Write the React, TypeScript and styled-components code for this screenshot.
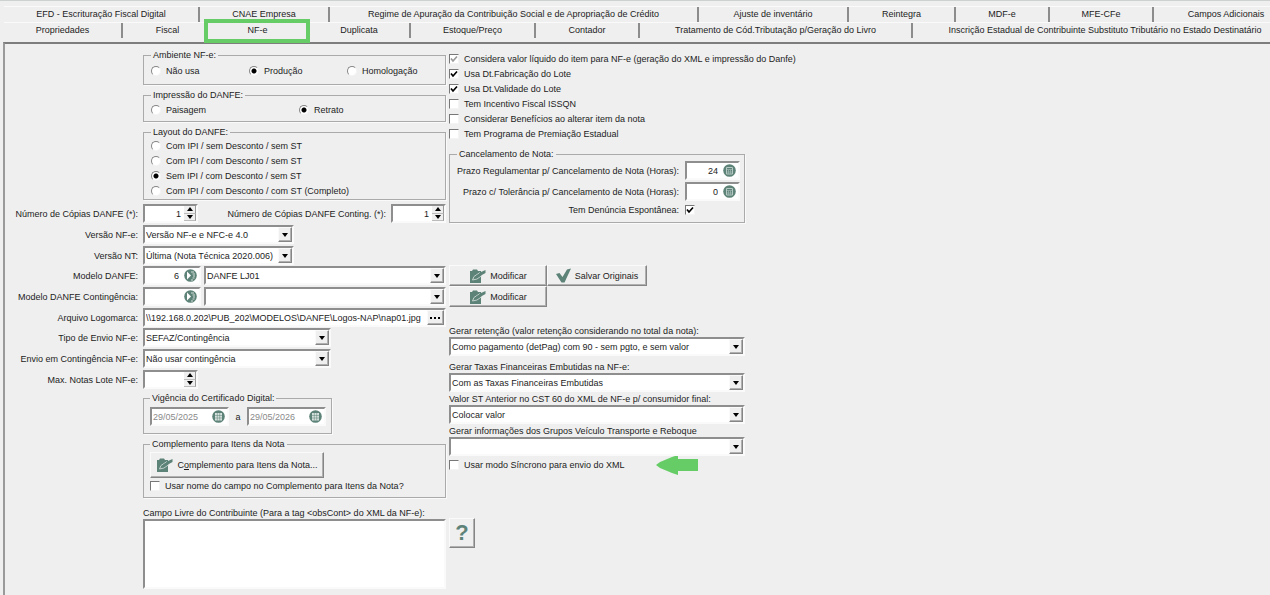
import React, { useId } from "react";
import styled, { createGlobalStyle, css } from "styled-components";

const Global = createGlobalStyle`
  *, *::before, *::after { box-sizing: border-box; }
  html, body, #root { min-height: 100vh; }
  body { margin: 0; background: #efefef; overflow-x: hidden; }
  body, button, input, select, textarea {
    font-family: "Liberation Sans", Arial, sans-serif;
    font-size: 9px;
    line-height: 12px;
    color: #1c1c1c;
  }
`;

const TEAL = "#5d8277";

const sunken = css`
  background: #fff;
  border: 2px solid;
  border-color: #8e8e8e #fafafa #fafafa #8e8e8e;
`;
const raised = css`
  background: #efefef;
  border: 1px solid;
  border-color: #fafafa #858585 #858585 #fafafa;
  box-shadow: inset -1px -1px 0 #b0b0b0;
`;

const Window = styled.div`
  display: flex;
  flex-direction: column;
  min-height: 100vh;
  padding: 5px 0 0 3px;
  border-top: 1px solid #cdd1cf;
  overflow: hidden;
`;
const TabRow = styled.div`
  display: flex;
  height: 16px;
  margin-left: 1px;
  border-top: 1px solid #fafafa;
`;
const Tab = styled.button<{ $w: number; $on?: boolean }>`
  position: relative;
  z-index: ${(p) => (p.$on ? 1 : 0)};
  flex: 0 0 ${(p) => p.$w}px;
  height: 15px;
  margin-left: ${(p) => (p.$on ? "-8px" : "0")};
  padding: 0;
  background: #efefef;
  border: 0;
  border-right: ${(p) => (p.$on ? "0" : "2px solid #8c8c8c")};
  line-height: ${(p) => (p.$on ? "13px" : "15px")};
  white-space: nowrap;
`;
const Highlight = styled.span`
  position: absolute;
  inset: -4px -1px -5px -2px;
  border: 4px solid #66cc66;
`;
const Page = styled.main`
  flex: 1;
  display: flex;
  align-items: flex-start;
  gap: 3px;
  margin-top: 4px;
  padding: 5px 0 4px;
  border: solid;
  border-width: 2px 0 0 2px;
  border-color: #7d7d7d #efefef #efefef #9a9a9a;
`;
const Column = styled.div<{ $w: number }>`
  display: flex;
  flex-direction: column;
  flex: 0 0 ${(p) => p.$w}px;
  min-width: 0;
  width: ${(p) => p.$w}px;
`;
const Indented = styled.div<{ $top?: number }>`
  display: flex;
  flex-direction: column;
  margin-top: ${(p) => p.$top ?? 0}px;
  margin-left: 138px;
  gap: 4px;
`;
const Group = styled.fieldset<{ $pad: string; $w?: number }>`
  margin: 0;
  min-width: 0;
  width: ${(p) => (p.$w ? p.$w + "px" : "auto")};
  padding: ${(p) => p.$pad};
  border: 1px solid #aaa;
  box-shadow: 1px 1px 0 #fafafa;
`;
const Legend = styled.legend<{ $indent?: number }>`
  margin-left: ${(p) => p.$indent ?? 0}px;
  padding: 0 2px;
  line-height: 12px;
`;
const Options = styled.div<{ $cols?: string }>`
  display: grid;
  grid-template-columns: ${(p) => p.$cols ?? "auto"};
`;
const OptionLabel = styled.label<{ $h: number }>`
  display: flex;
  align-items: center;
  gap: 5px;
  height: ${(p) => p.$h}px;
  white-space: nowrap;
`;
const RadioInput = styled.input`
  appearance: none;
  flex: none;
  width: 10px;
  height: 10px;
  margin: 0;
  border-radius: 50%;
  border: 1px solid;
  border-color: #858585 #f4f4f4 #f4f4f4 #858585;
  background: #fff;
  &:checked {
    background: radial-gradient(circle, #000 0 2px, #fff 3px);
  }
`;
const CheckWrap = styled.span`
  position: relative;
  flex: none;
  display: flex;
  width: 10px;
  height: 10px;
`;
const CheckInput = styled.input`
  appearance: none;
  width: 10px;
  height: 10px;
  margin: 0;
  border: 1px solid;
  border-color: #777 #f4f4f4 #f4f4f4 #777;
  background: #fff;
  & + svg { display: none; }
  &:checked + svg { display: block; }
`;
const Tick = styled.svg`
  position: absolute;
  inset: 1px;
  pointer-events: none;
`;
const Rows = styled.div`
  display: flex;
  flex-direction: column;
  gap: 1px;
  margin-top: 4px;
`;
const RowBlock = styled.div`
  display: flex;
  flex-direction: column;
  gap: 2px;
`;
const Row = styled.div`
  display: grid;
  grid-template-columns: 133px 303px;
  column-gap: 5px;
  align-items: center;
  height: 19px;
`;
const RowLabel = styled.label`
  text-align: right;
  white-space: nowrap;
`;
const Controls = styled.div<{ $spread?: boolean }>`
  display: flex;
  align-items: center;
  justify-content: ${(p) => (p.$spread ? "space-between" : "flex-start")};
  gap: 3px;
`;
const SecondCounter = styled(Controls)`
  gap: 5px;
`;
const Field = styled.div<{ $w?: number }>`
  ${sunken}
  position: relative;
  display: flex;
  align-items: center;
  flex: ${(p) => (p.$w ? `0 0 ${p.$w}px` : "1")};
  height: 19px;
`;
const TextInput = styled.input<{ $right?: boolean }>`
  flex: 1;
  min-width: 0;
  width: 0;
  height: 15px;
  padding: 0 1px;
  border: 0;
  background: none;
  outline: 0;
  text-align: ${(p) => (p.$right ? "right" : "left")};
  &:disabled { color: #8a8a8a; }
`;
const FieldIcon = styled.button`
  display: flex;
  flex: none;
  padding: 0;
  margin: 0 2px 0 4px;
  border: 0;
  background: none;
`;
const Stepper = styled.span`
  display: flex;
  flex-direction: column;
  flex: none;
  width: 12px;
  height: 15px;
  margin-left: 2px;
`;
const StepButton = styled.button`
  display: flex;
  align-items: center;
  justify-content: center;
  flex: 1;
  min-height: 0;
  padding: 0;
  background: #efefef;
  border: 0;
  border-right: 1px solid #999;
  border-bottom: 1px solid #bbb;
`;
const NativeSelect = styled.select`
  appearance: none;
  width: 100%;
  height: 15px;
  padding: 0 14px 0 1px;
  border: 0;
  background: none;
  outline: 0;
`;
const SelectArrow = styled.span`
  ${raised}
  position: absolute;
  right: 0;
  top: 0;
  display: flex;
  align-items: center;
  justify-content: center;
  width: 14px;
  height: 15px;
  pointer-events: none;
`;
const Browse = styled.button`
  ${raised}
  display: flex;
  align-items: center;
  justify-content: center;
  width: 17px;
  height: 15px;
  padding: 0;
`;
const Push = styled.button<{ $w: number; $h: number }>`
  ${raised}
  display: flex;
  align-items: center;
  justify-content: center;
  gap: 4px;
  width: ${(p) => p.$w}px;
  height: ${(p) => p.$h}px;
  padding: 0;
  white-space: nowrap;
`;
const ButtonGrid = styled.div`
  display: grid;
  grid-template-columns: 98px 100px;
  margin-top: 42px;
`;
const CancelRow = styled.div<{ $h: number }>`
  display: grid;
  grid-template-columns: 229px 55px;
  column-gap: 6px;
  align-items: center;
  height: ${(p) => p.$h}px;
`;
const Stacked = styled.div<{ $top: number }>`
  display: flex;
  flex-direction: column;
  margin-top: ${(p) => p.$top}px;
`;
const StackedLabel = styled.label`
  white-space: nowrap;
`;
const StackedField = styled.div`
  display: flex;
`;
const SyncRow = styled.div`
  display: flex;
  align-items: center;
  gap: 31px;
  height: 18px;
`;
const Memo = styled.textarea`
  ${sunken}
  height: 70px;
  width: 100%;
  resize: none;
  outline: 0;
`;
const HelpMark = styled.span`
  font-size: 22px;
  line-height: 24px;
  font-weight: bold;
  color: ${TEAL};
`;
const Dates = styled.div`
  display: flex;
  align-items: center;
  justify-content: space-between;
`;

const Triangle = ({ up }: { up?: boolean }) => (
  <svg width="6" height="4" viewBox="0 0 6 4">
    <path d={up ? "M0 4 3 0 6 4z" : "M0 0h6L3 4z"} fill="#000" />
  </svg>
);
const EditIcon = () => (
  <svg width="17" height="16" viewBox="0 0 17 16">
    <path d="M1 3h2l1-1.500h4L9 3h3v12H1z" fill={TEAL} />
    <path d="M3.500 12 5 8.500 11 4.500M3.500 12 8 11l5-3.500" fill="none" stroke="#c3d1cc" strokeWidth="1" />
    <path d="M5.500 9 12 4l4.500-2v3L12 7.500 7 10.500z" fill={TEAL} />
  </svg>
);
const CheckIcon = () => (
  <svg width="15" height="15" viewBox="0 0 15 15">
    <path d="M0 6l3.500-1L6.500 9 11 1.500 15 .5 8.500 14.500h-3z" fill={TEAL} />
  </svg>
);
const SearchIcon = () => (
  <svg width="13" height="13" viewBox="0 0 13 13">
    <circle cx="6.5" cy="6.5" r="6.3" fill={TEAL} />
    <path d="M3 2.500 7 6.500 3 10.500z" fill="#fff" />
    <path d="M7 3h3M8.500 5h2.500M9 7h2M8.500 9h2M7 11h2" stroke="#d5e0dc" />
  </svg>
);
const CalcIcon = () => (
  <svg width="13" height="13" viewBox="0 0 13 13">
    <circle cx="6.5" cy="6.5" r="6.3" fill={TEAL} />
    <path d="M3.500 3.500h6v6.500h-6z" fill="none" stroke="#b5c8c2" />
    <path d="M4 5.500h5M5.500 6v4M7.500 6v4M4 8h5" stroke="#9db5ae" strokeWidth=".8" />
  </svg>
);
const CalendarIcon = () => (
  <svg width="13" height="13" viewBox="0 0 13 13">
    <circle cx="6.5" cy="6.5" r="6.3" fill={TEAL} />
    <path d="M3 3h7v7.500H3z" fill="#d6e1de" />
    <path d="M3 5.500h7M3 8h7M5.300 3v7.500M7.700 3v7.500" stroke={TEAL} strokeWidth=".5" />
  </svg>
);

const Radio = ({ name, label, on, h = 12 }: { name: string; label: string; on?: boolean; h?: number }) => (
  <OptionLabel $h={h}>
    <RadioInput type="radio" name={name} defaultChecked={on} />
    {label}
  </OptionLabel>
);
const Box = ({ id, on, off }: { id?: string; on?: boolean; off?: boolean }) => (
  <CheckWrap>
    <CheckInput id={id} type="checkbox" defaultChecked={on} disabled={off} />
    <Tick width="8" height="8" viewBox="0 0 8 8">
      <path d="M1 3.500 3 6 7 1.500" fill="none" stroke={off ? "#999" : "#000"} strokeWidth="1.700" />
    </Tick>
  </CheckWrap>
);
const Check = ({ label, on, off }: { label: string; on?: boolean; off?: boolean }) => (
  <OptionLabel $h={15}>
    <Box on={on} off={off} />
    {label}
  </OptionLabel>
);
const Spin = ({ id, value }: { id: string; value: string }) => (
  <Field $w={55}>
    <TextInput id={id} defaultValue={value} $right />
    <Stepper>
      <StepButton type="button" aria-label="Aumentar"><Triangle up /></StepButton>
      <StepButton type="button" aria-label="Diminuir"><Triangle /></StepButton>
    </Stepper>
  </Field>
);
const Select = ({ id, value, w, label }: { id?: string; value: string; w?: number; label?: string }) => (
  <Field $w={w}>
    <NativeSelect id={id} aria-label={label}>
      <option>{value}</option>
    </NativeSelect>
    <SelectArrow><Triangle /></SelectArrow>
  </Field>
);
const SelectRow = ({ label, value, w }: { label: string; value: string; w: number }) => {
  const id = useId();
  return (
    <Row>
      <RowLabel htmlFor={id}>{label}</RowLabel>
      <Controls><Select id={id} value={value} w={w} /></Controls>
    </Row>
  );
};
const ModelRow = ({ label, code, name }: { label: string; code: string; name: string }) => {
  const id = useId();
  return (
    <Row>
      <RowLabel htmlFor={id}>{label}</RowLabel>
      <Controls>
        <Field $w={58}>
          <TextInput id={id} defaultValue={code} $right />
          <FieldIcon type="button" aria-label="Pesquisar"><SearchIcon /></FieldIcon>
        </Field>
        <Select value={name} label={label} />
      </Controls>
    </Row>
  );
};
const HoursRow = ({ label, value }: { label: string; value: string }) => {
  const id = useId();
  return (
    <CancelRow $h={21}>
      <RowLabel htmlFor={id}>{label}</RowLabel>
      <Field>
        <TextInput id={id} defaultValue={value} $right />
        <FieldIcon type="button" aria-label="Calculadora"><CalcIcon /></FieldIcon>
      </Field>
    </CancelRow>
  );
};
const StackedSelect = ({ label, value, top }: { label: string; value: string; top: number }) => {
  const id = useId();
  return (
    <Stacked $top={top}>
      <StackedLabel htmlFor={id}>{label}</StackedLabel>
      <StackedField><Select id={id} value={value} /></StackedField>
    </Stacked>
  );
};
const DateField = ({ value, label }: { value: string; label: string }) => (
  <Field $w={79}>
    <TextInput defaultValue={value} aria-label={label} disabled />
    <FieldIcon type="button" aria-label="Calendário"><CalendarIcon /></FieldIcon>
  </Field>
);

const upperTabs: [string, number][] = [
  ["EFD - Escrituração Fiscal Digital", 196],
  ["CNAE Empresa", 130],
  ["Regime de Apuração da Contribuição Social e de Apropriação de Crédito", 369],
  ["Ajuste de inventário", 150],
  ["Reintegra", 107],
  ["MDF-e", 94],
  ["MFE-CFe", 104],
  ["Campos Adicionais", 146],
];
const lowerTabs: [string, number][] = [
  ["Propriedades", 119],
  ["Fiscal", 91],
  ["NF-e", 103],
  ["Duplicata", 102],
  ["Estoque/Preço", 125],
  ["Contador", 104],
  ["Tratamento de Cód.Tributação p/Geração do Livro", 273],
  ["Inscrição Estadual de Contribuinte Substituto Tributário no Estado Destinatário", 386],
];

export default function App() {
  return (
    <>
      <Global />
      <Window>
        <TabRow role="tablist">
          {upperTabs.map(([t, w]) => <Tab key={t} role="tab" $w={w}>{t}</Tab>)}
        </TabRow>
        <TabRow role="tablist">
          {lowerTabs.map(([t, w]) => (
            <Tab key={t} role="tab" $w={w} $on={t === "NF-e"} aria-selected={t === "NF-e"}>
              {t}
              {t === "NF-e" && <Highlight />}
            </Tab>
          ))}
        </TabRow>
        <Page>
          <Column $w={441}>
            <Indented>
              <Group $pad="4px 7px 7px">
                <Legend>Ambiente NF-e:</Legend>
                <Options $cols="98px 98px auto">
                  <Radio name="amb" label="Não usa" />
                  <Radio name="amb" label="Produção" on />
                  <Radio name="amb" label="Homologação" />
                </Options>
              </Group>
              <Group $pad="3px 7px 5px">
                <Legend>Impressão do DANFE:</Legend>
                <Options $cols="148px auto">
                  <Radio name="imp" label="Paisagem" />
                  <Radio name="imp" label="Retrato" on />
                </Options>
              </Group>
              <Group $pad="0 7px 1px">
                <Legend>Layout do DANFE:</Legend>
                <Options>
                  <Radio h={15} name="lay" label="Com IPI / sem Desconto / sem ST" />
                  <Radio h={15} name="lay" label="Com IPI / com Desconto / sem ST" />
                  <Radio h={15} name="lay" label="Sem IPI / com Desconto / sem ST" on />
                  <Radio h={15} name="lay" label="Com IPI / com Desconto / com ST (Completo)" />
                </Options>
              </Group>
            </Indented>
            <Rows>
              <RowBlock>
                <Row>
                  <RowLabel htmlFor="copias">Número de Cópias DANFE (*):</RowLabel>
                  <Controls $spread>
                    <Spin id="copias" value="1" />
                    <SecondCounter>
                      <RowLabel htmlFor="conting">Número de Cópias DANFE Conting. (*):</RowLabel>
                      <Spin id="conting" value="1" />
                    </SecondCounter>
                  </Controls>
                </Row>
                <SelectRow label="Versão NF-e:" value="Versão NF-e e NFC-e 4.0" w={151} />
                <SelectRow label="Versão NT:" value="Última (Nota Técnica 2020.006)" w={151} />
              </RowBlock>
              <RowBlock>
                <ModelRow label="Modelo DANFE:" code="6" name="DANFE LJ01" />
                <ModelRow label="Modelo DANFE Contingência:" code="" name="" />
                <Row>
                  <RowLabel htmlFor="logo">Arquivo Logomarca:</RowLabel>
                  <Controls>
                    <Field>
                      <TextInput id="logo" defaultValue="\\192.168.0.202\PUB_202\MODELOS\DANFE\Logos-NAP\nap01.jpg" />
                      <Browse type="button" aria-label="Procurar">
                        <svg width="11" height="2"><path d="M0 0h2v2H0zM4 0h2v2H4zM8 0h2v2H8z" /></svg>
                      </Browse>
                    </Field>
                  </Controls>
                </Row>
              </RowBlock>
              <RowBlock>
                <SelectRow label="Tipo de Envio NF-e:" value="SEFAZ/Contingência" w={188} />
                <SelectRow label="Envio em Contingência NF-e:" value="Não usar contingência" w={188} />
                <Row>
                  <RowLabel htmlFor="lote">Max. Notas Lote NF-e:</RowLabel>
                  <Controls><Spin id="lote" value="" /></Controls>
                </Row>
              </RowBlock>
            </Rows>
            <Indented $top={3}>
              <Group $pad="3px 5px 7px 6px" $w={189}>
                <Legend>Vigência do Certificado Digital:</Legend>
                <Dates>
                  <DateField value="29/05/2025" label="Início da vigência" />
                  a
                  <DateField value="29/05/2026" label="Fim da vigência" />
                </Dates>
              </Group>
              <Group $pad="2px 6px 4px">
                <Legend>Complemento para Itens da Nota</Legend>
                <Push $w={174} $h={26}>
                  <EditIcon />
                  <span>C<u>o</u>mplemento para Itens da Nota...</span>
                </Push>
                <Check label="Usar nome do campo no Complemento para Itens da Nota?" />
              </Group>
              <Stacked $top={5}>
                <StackedLabel htmlFor="obs">{"Campo Livre do Contribuinte (Para a tag <obsCont> do XML da NF-e):"}</StackedLabel>
                <Memo id="obs" />
              </Stacked>
            </Indented>
          </Column>
          <Column $w={296}>
            <Stacked $top={2}>
              <Check label="Considera valor líquido do item para NF-e (geração do XML e impressão do Danfe)" on off />
              <Check label="Usa Dt.Fabricação do Lote" on />
              <Check label="Usa Dt.Validade do Lote" on />
              <Check label="Tem Incentivo Fiscal ISSQN" />
              <Check label="Considerar Benefícios ao alterar item da nota" />
              <Check label="Tem Programa de Premiação Estadual" />
            </Stacked>
            <Stacked $top={7}>
              <Group $pad="0 3px 5px 0">
                <Legend $indent={7}>Cancelamento de Nota:</Legend>
                <HoursRow label="Prazo Regulamentar p/ Cancelamento de Nota (Horas):" value="24" />
                <HoursRow label="Prazo c/ Tolerância p/ Cancelamento de Nota (Horas):" value="0" />
                <CancelRow $h={15}>
                  <RowLabel htmlFor="denuncia">Tem Denúncia Espontânea:</RowLabel>
                  <Box id="denuncia" on />
                </CancelRow>
              </Group>
            </Stacked>
            <ButtonGrid>
              <Push $w={98} $h={21}><EditIcon />Modificar</Push>
              <Push $w={100} $h={21}><CheckIcon />Salvar Originais</Push>
              <Push $w={98} $h={21}><EditIcon />Modificar</Push>
            </ButtonGrid>
            <StackedSelect top={18} label="Gerar retenção (valor retenção considerando no total da nota):" value="Como pagamento (detPag) com 90 - sem pgto, e sem valor" />
            <StackedSelect top={5} label="Gerar Taxas Financeiras Embutidas na NF-e:" value="Com as Taxas Financeiras Embutidas" />
            <StackedSelect top={1} label="Valor ST Anterior no CST 60 do XML de NF-e p/ consumidor final:" value="Colocar valor" />
            <StackedSelect top={1} label="Gerar informações dos Grupos Veículo Transporte e Reboque" value="" />
            <SyncRow>
              <Check label="Usar modo Síncrono para envio do XML" />
              <svg width="42" height="20" viewBox="0 0 42 20"><path d="M0 10 4 7 16 2 22 0v4h20v12H22v4L16 18 4 13z" fill="#66cc66" /></svg>
            </SyncRow>
            <Stacked $top={44}>
              <Push $w={26} $h={30} aria-label="Ajuda"><HelpMark>?</HelpMark></Push>
            </Stacked>
          </Column>
        </Page>
      </Window>
    </>
  );
}
